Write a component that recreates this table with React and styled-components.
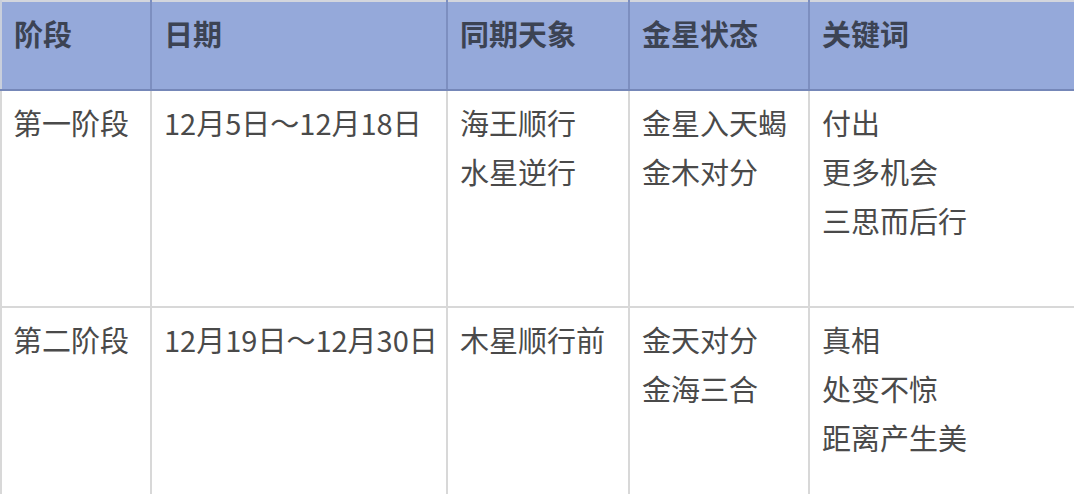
import React from 'react';
import styled, { createGlobalStyle } from 'styled-components';

const rows = [
    {
        stage: '第一阶段',
        date: '12月5日～12月18日',
        sky: ['海王顺行', '水星逆行'],
        venus: ['金星入天蝎', '金木对分'],
        words: ['付出', '更多机会', '三思而后行'],
    },
    {
        stage: '第二阶段',
        date: '12月19日～12月30日',
        sky: ['木星顺行前'],
        venus: ['金天对分', '金海三合'],
        words: ['真相', '处变不惊', '距离产生美'],
    },
];

const columns = [
    { title: '阶段', width: 150 },
    { title: '日期', width: 296 },
    { title: '同期天象', width: 182 },
    { title: '金星状态', width: 180 },
    { title: '关键词', width: 266 },
];

export default function App() {
    return (
        <>
            <GlobalStyle />
            <Table>
                <colgroup>
                    {columns.map((c) => (
                        <col key={c.title} style={{ width: c.width }} />
                    ))}
                </colgroup>
                <thead>
                    <tr>
                        {columns.map((c) => (
                            <HeadCell key={c.title}>{c.title}</HeadCell>
                        ))}
                    </tr>
                </thead>
                <tbody>
                    {rows.map((r) => (
                        <Row key={r.stage}>
                            <Cell>{r.stage}</Cell>
                            <Cell>{r.date}</Cell>
                            <Cell>{r.sky.map((t) => <Line key={t}>{t}</Line>)}</Cell>
                            <Cell>{r.venus.map((t) => <Line key={t}>{t}</Line>)}</Cell>
                            <Cell>{r.words.map((t) => <Line key={t}>{t}</Line>)}</Cell>
                        </Row>
                    ))}
                </tbody>
            </Table>
        </>
    );
}

// ::::::::::Styled-Components::::::::::
const GlobalStyle = createGlobalStyle`
    body {
        margin: 0;
        background: #ffffff;
        font-family: "Noto Sans CJK SC", "Noto Sans", sans-serif;
        overflow: hidden;
    }
`
const Table = styled.table`
    width: 1074px;
    table-layout: fixed;
    border-collapse: collapse;
    border-top: 2px solid #d3d6dd;
    font-size: 29px;
    line-height: 49px;
`
const HeadCell = styled.th`
    height: 89px;
    padding: 7px 12px 0 12px;
    background-color: #95a9da;
    border-left: 2px solid #7d8fc0;
    border-bottom: 2px solid #7587b8;
    color: #3c4353;
    font-weight: 700;
    text-align: left;
    vertical-align: top;
    white-space: nowrap;
    box-sizing: border-box;

    &:first-child {
        border-left: 2px solid #c9cfdc;
    }
    &:last-child {
        border-right: 2px solid #7d8fc0;
    }
`
const Row = styled.tr`
    height: 217px;
    border-bottom: 2px solid #d8d8d8;
`
const Cell = styled.td`
    padding: 7px 10px 0 12px;
    border-left: 2px solid #d8d8d8;
    border-right: 2px solid #d8d8d8;
    color: #4a4a4a;
    vertical-align: top;
    white-space: nowrap;

    &:first-child {
        padding-left: 11px;
    }
`
const Line = styled.div`
    height: 49px;
`
